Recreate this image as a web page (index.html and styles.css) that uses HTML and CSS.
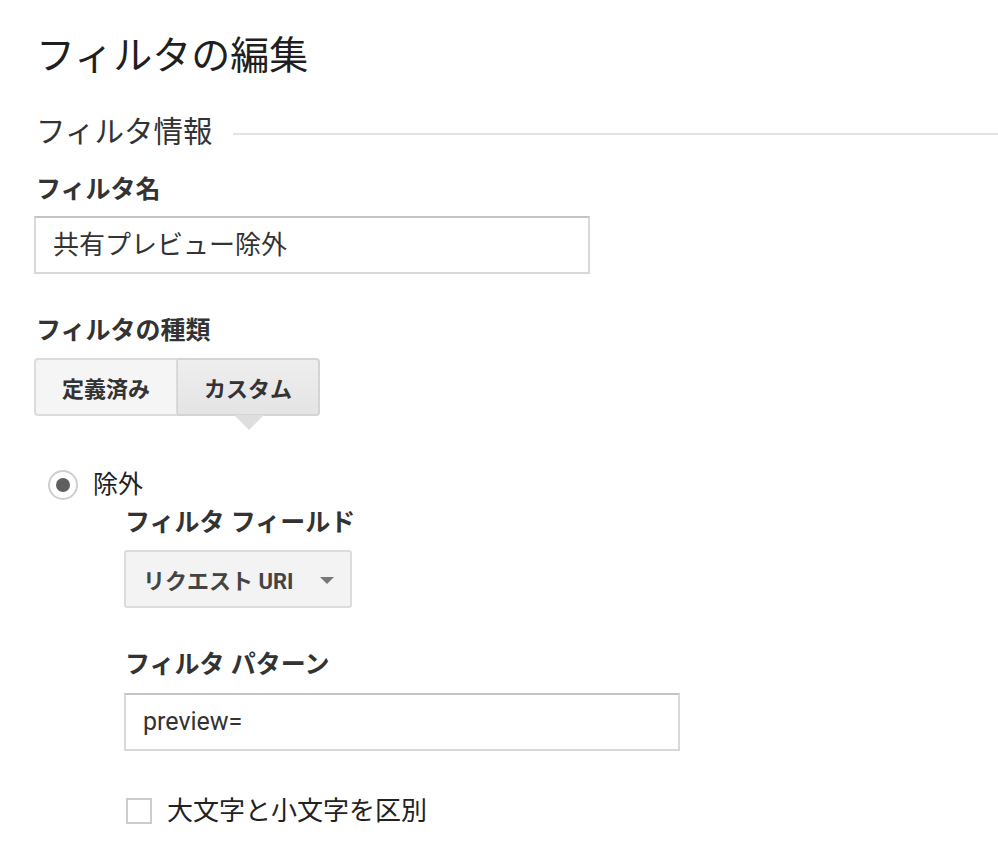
FILE: index.html
```html
<!DOCTYPE html>
<html lang="ja">
<head>
<meta charset="utf-8">
<title>フィルタの編集</title>
<link rel="stylesheet" href="styles.css">
</head>
<body>
<div class="page">
  <h1 class="title">フィルタの編集</h1>
  <div class="section-head">
    <span class="section-title">フィルタ情報</span>
    <span class="section-rule"></span>
  </div>
  <div class="label label-name">フィルタ名</div>
  <div class="input input-name">共有プレビュー除外</div>
  <div class="label label-type">フィルタの種類</div>
  <div class="btn-group">
    <div class="btn">定義済み</div>
    <div class="btn btn-active">カスタム</div>
  </div>
  <div class="custom">
    <div class="radio-row">
      <span class="radio"><span class="radio-dot"></span></span>
      <span class="radio-label">除外</span>
    </div>
    <div class="sub">
      <div class="label label-field">フィルタ フィールド</div>
      <div class="select">
        <span class="select-text">リクエスト URI</span>
        <span class="select-caret"></span>
      </div>
      <div class="label label-pattern">フィルタ パターン</div>
      <div class="input input-pattern">preview=</div>
      <div class="check-row">
        <span class="checkbox"></span>
        <span class="check-label">大文字と小文字を区別</span>
      </div>
    </div>
  </div>
</div>
</body>
</html>
```
FILE: styles.css
```css
html, body {
  margin: 0;
  padding: 0;
  background: #fff;
}
body {
  font-family: Roboto, "Noto Sans CJK JP", sans-serif;
  color: #222;
}
.page {
  padding: 36px 0 0 36px;
  display: flex;
  flex-direction: column;
  align-items: flex-start;
}
.title {
  margin: 0;
  font-size: 39px;
  line-height: 40px;
  font-weight: 400;
  color: #1f1f1f;
}
.section-head {
  margin-top: 41px;
  display: flex;
  align-items: center;
  align-self: stretch;
  gap: 21px;
}
.section-title {
  font-size: 29.5px;
  line-height: 30px;
  color: #333;
}
.section-rule {
  flex: 1;
  height: 2px;
  background: #e3e3e3;
  margin-top: 4px;
}
.label {
  font-size: 25px;
  line-height: 26px;
  font-weight: 700;
  color: #333;
}
.label-name { margin-top: 30px; }
.input {
  box-sizing: border-box;
  height: 58px;
  border: 2px solid #d9d9d9;
  border-top-color: #c4c4c4;
  background: #fff;
  font-size: 26px;
  line-height: 54px;
  padding-left: 17px;
  color: #333;
}
.input-name {
  margin-top: 13px;
  margin-left: -2px;
  width: 556px;
}
.input-pattern {
  font-size: 25px;
}
.label-type { margin-top: 44px; }
.btn-group {
  margin-top: 14px;
  margin-left: -2px;
  display: flex;
  position: relative;
}
.btn {
  box-sizing: border-box;
  width: 143px;
  height: 58px;
  display: flex;
  align-items: center;
  justify-content: center;
  font-size: 22px;
  font-weight: 700;
  color: #333;
  background: #f5f5f5;
  border: 2px solid #dcdcdc;
}
.btn:first-child {
  border-radius: 4px 0 0 4px;
  border-right-width: 1px;
}
.btn-active {
  background: linear-gradient(#eeeeee, #e4e4e4);
  border-color: #d4d4d4;
  border-left-width: 1px;
  border-radius: 0 4px 4px 0;
  position: relative;
}
.btn-active::after {
  content: "";
  position: absolute;
  left: 56px;
  bottom: -16px;
  border-left: 15px solid transparent;
  border-right: 15px solid transparent;
  border-top: 15px solid #dedede;
}
.custom {
  margin-top: 54px;
  display: flex;
  flex-direction: column;
}
.radio-row {
  margin-left: 12px;
  display: flex;
  align-items: center;
  gap: 15px;
}
.radio {
  box-sizing: border-box;
  width: 30px;
  height: 30px;
  border: 2px solid #cfcfcf;
  border-radius: 50%;
  display: flex;
  align-items: center;
  justify-content: center;
}
.radio-dot {
  width: 14px;
  height: 14px;
  border-radius: 50%;
  background: #5f5f5f;
}
.radio-label {
  font-size: 25px;
  line-height: 30px;
  color: #222;
}
.sub {
  margin-left: 89px;
  display: flex;
  flex-direction: column;
  align-items: flex-start;
}
.label-field { margin-top: 10px; }
.select {
  box-sizing: border-box;
  margin-top: 14px;
  margin-left: -1px;
  width: 228px;
  height: 58px;
  background: #f3f3f3;
  border: 2px solid #dcdcdc;
  border-radius: 3px;
  display: flex;
  align-items: center;
  padding-left: 17px;
}
.select-text {
  font-size: 22px;
  font-weight: 700;
  color: #444;
}
.select-caret {
  margin-left: auto;
  margin-right: 16px;
  margin-top: 3px;
  border-left: 7px solid transparent;
  border-right: 7px solid transparent;
  border-top: 7px solid #777;
}
.label-pattern { margin-top: 44px; }
.input-pattern {
  margin-top: 15px;
  margin-left: -1px;
  width: 556px;
}
.check-row {
  margin-top: 45px;
  margin-left: 1px;
  display: flex;
  align-items: center;
  gap: 15px;
}
.checkbox {
  box-sizing: border-box;
  width: 26px;
  height: 26px;
  border: 2px solid #cccccc;
  background: #fff;
}
.check-label {
  font-size: 26px;
  line-height: 30px;
  color: #222;
}
```
